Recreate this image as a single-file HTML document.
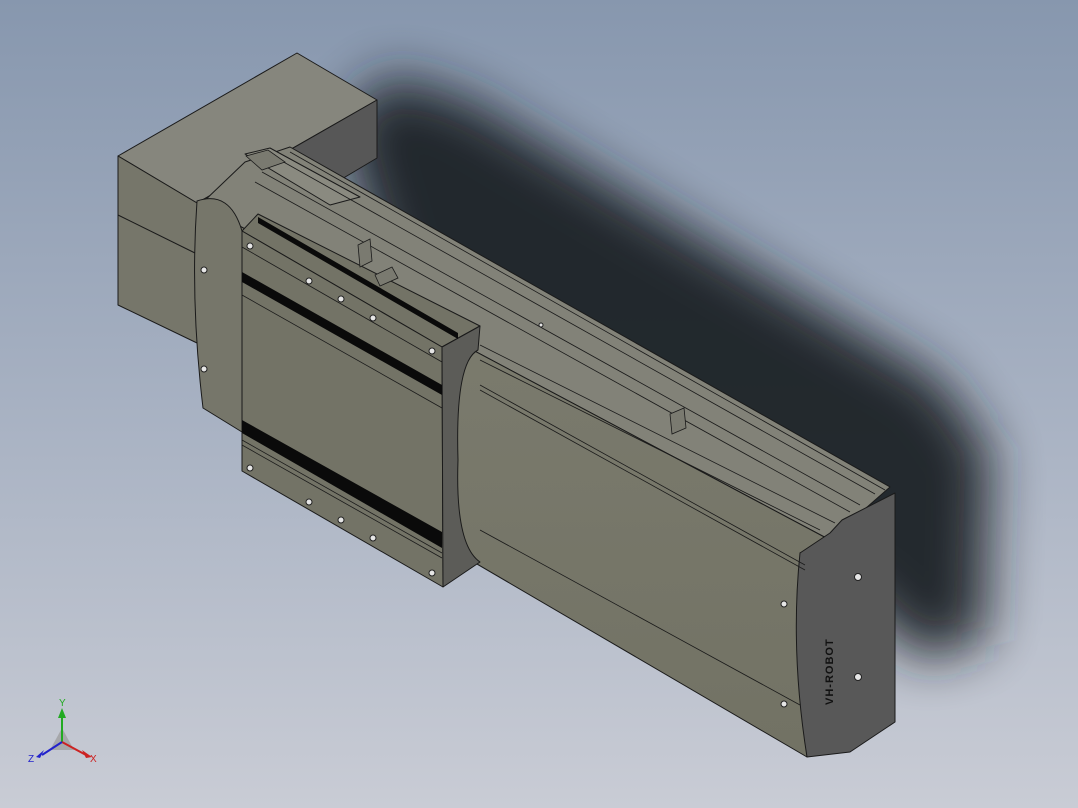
<!DOCTYPE html>
<html><head><meta charset="utf-8"><style>
html,body{margin:0;padding:0;width:1078px;height:808px;overflow:hidden}
body{background:linear-gradient(180deg,#8797ae 0%,#a7b1c2 50%,#c9ccd5 100%)}
svg{position:absolute;left:0;top:0}
</style></head><body>
<svg width="1078" height="808" viewBox="0 0 1078 808">
<defs>
<filter id="bl" x="-30%" y="-30%" width="160%" height="160%"><feGaussianBlur stdDeviation="26"/></filter>
<linearGradient id="side" x1="0" y1="0" x2="0" y2="1"><stop offset="0" stop-color="#7d7d70"/><stop offset="1" stop-color="#727264"/></linearGradient>
</defs>
<polygon filter="url(#bl)" fill="#1e2126" opacity="0.95" points="340,120 390,75 470,100 940,380 990,450 985,640 920,660 860,600 600,470 400,330"/>
<g stroke="#1a1a1a" stroke-width="1" stroke-linejoin="round">
<polygon fill="#86867d" points="118,156 297,53 377,100 197,203"/>
<polygon fill="#575757" points="377,100 377,158 320,192 197,262 197,203"/>
<polygon fill="#76766a" points="118,156 197,203 197,343 118,305"/>
<line x1="118" y1="215" x2="197" y2="254"/>
<polygon fill="#828278" points="245,162 290,147 890,487 850,522 830,540 200,205"/>
<polygon fill="#8a8a80" points="245,154 270,148 360,197 330,205"/>
<polygon fill="url(#side)" points="200,205 830,540 800,553 807,757 205,405"/>
<path fill="#585858" d="M800,553 L830,533 L842,520 L895,493 L895,722 L850,752 L807,757 Q790,650 800,553Z"/>
<path fill="#76766a" d="M197,201 Q230,190 242,231 L242,432 L203,408 Q190,300 197,201Z"/>
<polygon fill="#737366" points="242,231 258,214 480,326 442,347"/>
<polygon fill="#737366" points="242,231 442,347 443,587 242,471"/>
<path fill="#5c5c58" d="M442,347 L480,326 L478,350 Q455,362 458,460 Q455,545 480,562 L443,587Z"/>
</g>
<g stroke="#1a1a1a" stroke-width="0.8" fill="none">
<line x1="290" y1="152" x2="885" y2="490"/>
<line x1="280" y1="160" x2="875" y2="494"/>
<line x1="262" y1="172" x2="860" y2="505"/>
<line x1="255" y1="182" x2="850" y2="512"/>
<line x1="480" y1="345" x2="835" y2="523"/>
<line x1="480" y1="360" x2="820" y2="530"/>
<line x1="480" y1="385" x2="805" y2="565"/>
<line x1="480" y1="390" x2="805" y2="570"/>
<line x1="480" y1="530" x2="800" y2="705"/>
<line x1="242" y1="295" x2="442" y2="408"/>
<line x1="242" y1="247" x2="442" y2="362"/>
<line x1="242" y1="440" x2="442" y2="553"/>
<line x1="242" y1="445" x2="442" y2="558"/>
</g>
<g fill="#0a0a0a">
<polygon points="258,217 458,333 458,339 258,223"/>
<polygon points="242,272 442,385 442,395 242,282"/>
<polygon points="242,420 442,532 442,548 242,433"/>
</g>
<g stroke="#1a1a1a" stroke-width="0.8" fill="#7a7a70">
<polygon points="358,245 370,239 372,261 360,267"/>
<polygon points="375,275 392,267 398,278 380,286"/>
<polygon points="670,414 684,408 686,428 672,434"/>
<polygon points="246,156 268,150 285,162 262,170"/>
</g>
<g fill="#e6e6e6" stroke="#222" stroke-width="1">
<circle cx="250" cy="246" r="3"/><circle cx="309" cy="281" r="3"/><circle cx="341" cy="299" r="3"/><circle cx="373" cy="318" r="3"/><circle cx="432" cy="351" r="3"/>
<circle cx="250" cy="468" r="3"/><circle cx="309" cy="502" r="3"/><circle cx="341" cy="520" r="3"/><circle cx="373" cy="538" r="3"/><circle cx="432" cy="573" r="3"/>
<circle cx="204" cy="270" r="3"/><circle cx="204" cy="369" r="3"/>
<circle cx="784" cy="604" r="3"/><circle cx="784" cy="704" r="3"/>
<circle cx="858" cy="577" r="3.5"/><circle cx="858" cy="677" r="3.5"/>
<circle cx="541" cy="325" r="2"/>
</g>
<text x="0" y="0" transform="translate(833,705) rotate(-90)" font-family="Liberation Sans,sans-serif" font-size="11" font-weight="bold" fill="#111" letter-spacing="1">VH-ROBOT</text>
<g font-family="Liberation Sans,sans-serif" font-size="10">
<path d="M50,750 L62,728 L74,750Z" fill="#9a9a9a" opacity="0.7"/>
<line x1="62" y1="742" x2="62" y2="712" stroke="#2a2" stroke-width="2"/>
<polygon points="58,718 66,718 62,708" fill="#2a2"/>
<line x1="62" y1="742" x2="86" y2="755" stroke="#c22" stroke-width="2"/>
<polygon points="82,750 86,758 92,757" fill="#c22"/>
<line x1="62" y1="742" x2="42" y2="755" stroke="#22c" stroke-width="2"/>
<polygon points="44,750 40,758 36,757" fill="#22c"/>
<text x="59" y="706" fill="#2a2">Y</text>
<text x="90" y="762" fill="#c22">X</text>
<text x="28" y="762" fill="#22c">Z</text>
</g>
</svg>
</body></html>
